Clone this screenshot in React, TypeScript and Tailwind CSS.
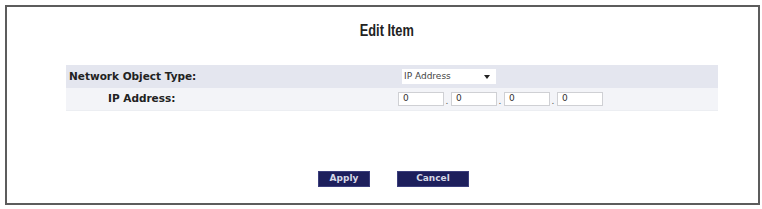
const labelFont = { fontFamily: '"DejaVu Sans", Verdana, sans-serif' };

function IpBox({ last = false }: { last?: boolean }) {
  return (
    <div className="flex items-end">
      <div className="flex h-[14px] w-[46px] items-center border border-[#cfd0d4] bg-white pl-[4px] text-[9px] text-[#333]">
        0
      </div>
      {!last && <span className="w-[6px] text-center text-[9px] leading-[10px] text-[#555]">.</span>}
    </div>
  );
}

export default function App() {
  return (
    <div className="h-[209px] w-[762px] bg-white pl-[5px] pt-[5px]" style={labelFont}>
      <div className="flex h-[200px] w-[755px] flex-col border-2 border-[#5c5c5c]">
        <div className="mt-[15px] flex justify-center pl-[8px]">
          <h1
            className="inline-block scale-x-[0.8] text-[16px] font-bold leading-[18px] text-[#222]"
            style={{ fontFamily: '"Liberation Sans", Arial, sans-serif' }}
          >
            Edit Item
          </h1>
        </div>

        <div className="ml-[59px] mt-[25px] flex w-[652px] flex-col text-[10.5px] text-[#222]">
          <div className="flex h-[23px] items-center bg-[#e4e6ef]">
            <div className="w-[330px] pl-[3px] font-bold">Network Object Type:</div>
            <div className="ml-[6px] flex h-[15px] w-[94px] items-center justify-between bg-white pl-[2px] pr-[6px] text-[9px] text-[#444]">
              <span>IP Address</span>
              <svg width="6" height="4" viewBox="0 0 6 4">
                <path d="M0 0h6L3 4z" fill="#222" />
              </svg>
            </div>
          </div>
          <div className="flex h-[23px] items-center border-b border-[#eceef2] bg-[#f3f4f8]">
            <div className="w-[330px] pl-[42px] font-bold">IP Address:</div>
            <div className="ml-[2px] flex items-center gap-[1px]">
              <IpBox />
              <IpBox />
              <IpBox />
              <IpBox last />
            </div>
          </div>
        </div>

        <div className="mt-[60px] flex justify-center gap-[27px] pl-[22px]">
          <button className="h-[16px] w-[52px] border border-[#3b3e7c] bg-[#1d1f5c] text-[9px] font-bold text-[#d6d8e6]">
            Apply
          </button>
          <button className="h-[16px] w-[72px] border border-[#3b3e7c] bg-[#1d1f5c] text-[9px] font-bold text-[#d6d8e6]">
            Cancel
          </button>
        </div>
      </div>
    </div>
  );
}
